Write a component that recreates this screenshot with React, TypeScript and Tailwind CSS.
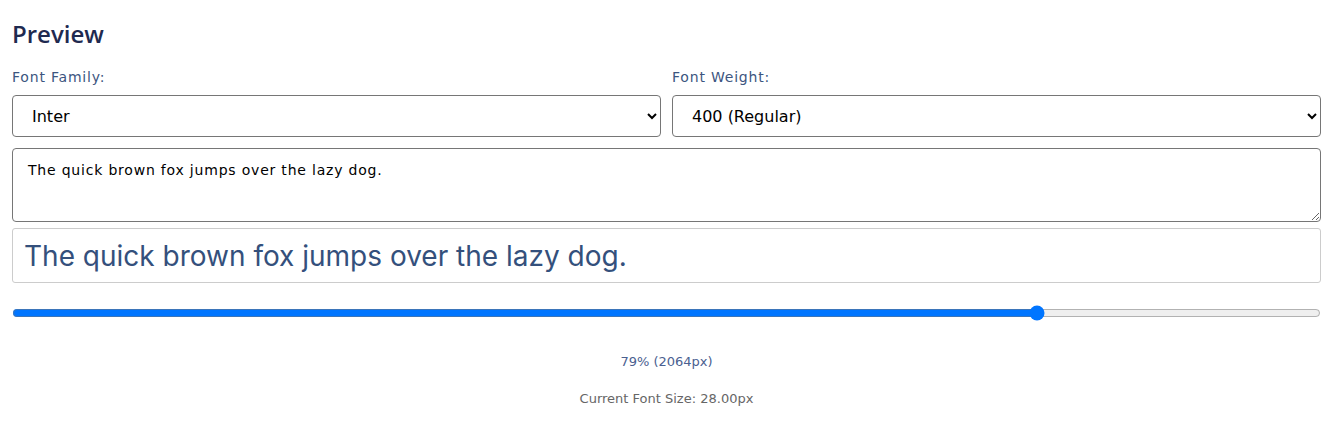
import { useState } from "react";

export default function App() {
  const [text, setText] = useState("The quick brown fox jumps over the lazy dog.");
  const [size, setSize] = useState(78.65);

  return (
    <div
      className="bg-white pl-3 pr-2 pt-[18px] pb-4 min-h-screen"
      style={{ fontFamily: "'DejaVu Sans', 'Open Sans', sans-serif" }}
    >
      <h2
        className="text-[24px] font-semibold text-[#1f2a50] leading-8 mb-[17px]"
        style={{ fontFamily: "'Open Sans', sans-serif" }}
      >
        Preview
      </h2>

      <div className="grid grid-cols-2 gap-[11px]">
        <div className="flex flex-col">
          <label className="text-[14px] tracking-[0.8px] text-[#3c5580] leading-5 mb-[8px]">Font Family:</label>
          <select className="h-[42px] border border-[#767676] rounded-[4px] pl-[15px] pr-2 text-[16px] text-black bg-white">
            <option>Inter</option>
            <option>Roboto</option>
            <option>Lato</option>
          </select>
        </div>
        <div className="flex flex-col">
          <label className="text-[14px] tracking-[0.8px] text-[#3c5580] leading-5 mb-[8px]">Font Weight:</label>
          <select className="h-[42px] border border-[#767676] rounded-[4px] pl-[15px] pr-2 text-[16px] text-black bg-white">
            <option>400 (Regular)</option>
            <option>700 (Bold)</option>
          </select>
        </div>
      </div>

      <textarea
        value={text}
        onChange={(e) => setText(e.target.value)}
        className="mt-[11px] block w-full h-[74px] border border-[#767676] rounded-[4px] px-[15px] pt-[11px] text-[14px] tracking-[0.8px] text-black"
      />

      <div
        className="mt-[6px] h-[55px] flex items-center border border-[#cccccc] rounded-[3px] px-[11px] text-[28px] text-[#34507c] whitespace-nowrap overflow-hidden"
        style={{ fontFamily: "Inter, sans-serif", fontWeight: 400 }}
      >
        {text}
      </div>

      <input
        type="range"
        min={0}
        max={100}
        step="any"
        value={size}
        onChange={(e) => setSize(Number(e.target.value))}
        className="mt-[22px] block w-full"
      />

      <p className="mt-[31px] text-center text-[13px] text-[#4a6090]">79% (2064px)</p>
      <p className="mt-[17px] text-center text-[13px] text-[#666666]">Current Font Size: 28.00px</p>
    </div>
  );
}
